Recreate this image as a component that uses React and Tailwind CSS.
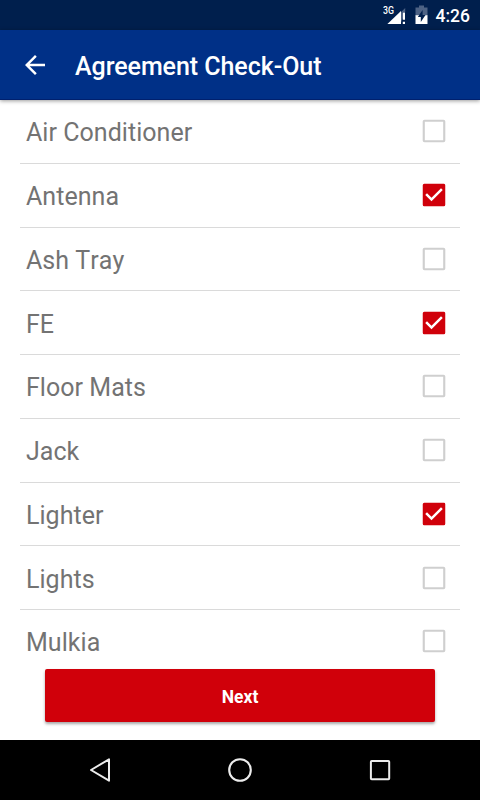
import { useState } from 'react';

const ITEMS = [
    { name: 'Air Conditioner', checked: false },
    { name: 'Antenna', checked: true },
    { name: 'Ash Tray', checked: false },
    { name: 'FE', checked: true },
    { name: 'Floor Mats', checked: false },
    { name: 'Jack', checked: false },
    { name: 'Lighter', checked: true },
    { name: 'Lights', checked: false },
    { name: 'Mulkia', checked: false },
];

const StatusBar = () => (
    <div className="flex h-[30px] shrink-0 items-center justify-end bg-[#001f4d] pr-[10px] text-white">
        <svg width="24" height="22" viewBox="0 0 24 22" className="mr-[8px]">
            <path d="M22.2 4v4h-2.6v6l-2 6V8.5z" fill="#4d6284" />
            <path d="M4.4 20L18 7v13z" fill="#fff" />
            <path d="M19.8 8.6H22v7.2h-2.2zM19.8 17.8H22V20h-2.2z" fill="#fff" />
            <text x="0" y="10.4" fontSize="10.5" fontWeight="500" textLength="11" lengthAdjust="spacingAndGlyphs" fill="#fff">
                3G
            </text>
        </svg>
        <svg width="13" height="20" viewBox="0 0 13 20" className="mr-[8px]">
            <path d="M4 .5h5v2h3.5v8H.5v-8H4z" fill="#4d6284" />
            <path d="M.5 10.2h12V19H.5z" fill="#fff" />
            <path d="M7.6 5L2.8 12h3v5l4.7-7H7.6z" fill="#001f4d" />
        </svg>
        <span className="pt-[3px] text-[17.5px] leading-none font-medium">4:26</span>
    </div>
);

const Header = () => (
    <div className="relative z-10 flex h-[70px] shrink-0 items-center border-b border-[#00206e] bg-[#003087] pl-[20px] shadow-[0_1px_4px_rgba(0,0,0,0.4)]">
        <button type="button" aria-label="Back">
            <svg width="30" height="30" viewBox="0 0 24 24" fill="#fff">
                <path d="M20 11H7.8l5.6-5.6L12 4l-8 8 8 8 1.4-1.4L7.8 13H20z" />
            </svg>
        </button>
        <h1 className="ml-[25px] pt-[5px] text-[25px] leading-[30px] font-medium tracking-[-0.05px] text-white">Agreement Check-Out</h1>
    </div>
);

const CheckIcon = ({ checked }) => (
    <svg width="30" height="30" viewBox="0 0 24 24">
        {checked ? (
            <path
                d="M19.6 3H4.2A1.2 1.2 0 0 0 3 4.2v15.6A1.2 1.2 0 0 0 4.2 21h15.6a1.2 1.2 0 0 0 1.2-1.2V4.2A1.2 1.2 0 0 0 19.6 3zM10 17l-5-5 1.4-1.4L10 14.2l7.6-7.6L19 8z"
                fill="#d0000a"
            />
        ) : (
            <rect x="3.8" y="3.8" width="16.4" height="16.4" rx="0.6" fill="none" stroke="#cfcfcf" strokeWidth="1.7" />
        )}
    </svg>
);

const Row = ({ item, onToggle }) => (
    <li
        onClick={onToggle}
        className="flex h-[63.75px] shrink-0 cursor-pointer items-center justify-between border-b border-[#dadada] pr-[11px] pl-[6px]"
    >
        <span className="pt-[4px] text-[25px] leading-[30px] tracking-[0.04px] text-[#737373] [font-kerning:none]">{item.name}</span>
        <CheckIcon checked={item.checked} />
    </li>
);

const NavBar = () => (
    <div className="flex h-[60px] shrink-0 items-center justify-center gap-[110px] bg-black">
        <svg width="30" height="30" viewBox="0 0 30 30" fill="none" stroke="#ececec" strokeWidth="2">
            <path d="M24 4.3v21.4L6 15z" strokeLinejoin="round" />
        </svg>
        <svg width="30" height="30" viewBox="0 0 30 30" fill="none" stroke="#ececec" strokeWidth="2.1">
            <circle cx="15" cy="15" r="10.8" />
        </svg>
        <svg width="30" height="30" viewBox="0 0 30 30" fill="none" stroke="#ececec" strokeWidth="2">
            <rect x="5.9" y="5.9" width="18.3" height="18.3" rx="0.8" />
        </svg>
    </div>
);

export default function App() {
    const [items, setItems] = useState(ITEMS);

    const toggle = (name) => {
        setItems(items.map((item) => (item.name === name ? { ...item, checked: !item.checked } : item)));
    };

    return (
        <div className="flex h-[800px] w-[480px] flex-col overflow-hidden bg-white font-[Roboto,sans-serif]">
            <StatusBar />
            <Header />
            <ul className="flex h-[569px] shrink-0 flex-col overflow-hidden px-[20px]">
                {items.map((item) => (
                    <Row key={item.name} item={item} onToggle={() => toggle(item.name)} />
                ))}
            </ul>
            <div className="h-[71px] shrink-0 px-[45px]">
                <button
                    type="button"
                    className="h-[53px] w-full rounded-[2px] bg-[#d0000a] pt-[3px] text-[17.5px] font-bold text-white shadow-[0_2px_3px_rgba(0,0,0,0.35)]"
                >
                    Next
                </button>
            </div>
            <NavBar />
        </div>
    );
}
